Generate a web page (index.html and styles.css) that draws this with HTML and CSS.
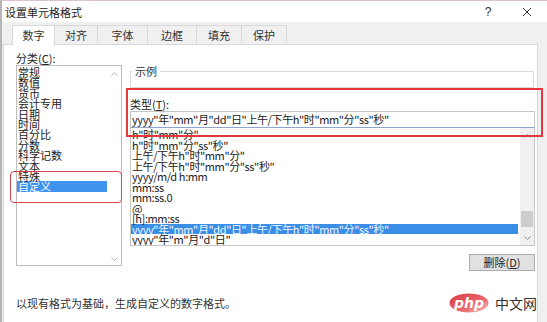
FILE: index.html
```html
<!DOCTYPE html>
<html>
  <head>
    <meta charset="utf-8">
    <link rel="stylesheet" href="styles.css">
  </head>
  <body>
    <div class="window">
      <div class="titlebar">
        <span class="title">设置单元格格式</span>
        <span class="help">?</span>
        <span class="close">
          <svg width="10" height="10" viewBox="0 0 10 10"><path d="M1 1L9 9M9 1L1 9" stroke="#333" stroke-width="1"/></svg>
        </span>
      </div>

      <div class="tabs">
        <div class="tab active" style="width:43px">数字</div>
        <div class="tab" style="width:43px">对齐</div>
        <div class="tab" style="width:50px">字体</div>
        <div class="tab" style="width:49px">边框</div>
        <div class="tab" style="width:45px">填充</div>
        <div class="tab" style="width:45px">保护</div>
      </div>

      <div class="panel">
        <div class="leftcol">
          <div class="label">分类(<u>C</u>):</div>
          <div class="catbox">
            <div class="catitems">
              <div>常规</div>
              <div>数值</div>
              <div>货币</div>
              <div>会计专用</div>
              <div>日期</div>
              <div>时间</div>
              <div>百分比</div>
              <div>分数</div>
              <div>科学记数</div>
              <div>文本</div>
              <div>特殊</div>
              <div class="sel">自定义</div>
            </div>
            <div class="catscroll">
              <svg width="7" height="4" viewBox="0 0 7 4"><path d="M0.5 3.5L3.5 0.5L6.5 3.5" fill="none" stroke="#b4b4b4"/></svg>
              <svg width="7" height="4" viewBox="0 0 7 4"><path d="M0.5 0.5L3.5 3.5L6.5 0.5" fill="none" stroke="#b4b4b4"/></svg>
            </div>
          </div>
        </div>

        <div class="rightcol">
          <fieldset class="sample"><legend>示例</legend></fieldset>
          <div class="label typelabel">类型(<u>T</u>):</div>
          <div class="typeinput">yyyy"年"mm"月"dd"日"上午/下午h"时"mm"分"ss"秒"</div>
          <div class="fmtbox">
            <div class="fmtitems">
              <div>h"时"mm"分"</div>
              <div>h"时"mm"分"ss"秒"</div>
              <div>上午/下午h"时"mm"分"</div>
              <div>上午/下午h"时"mm"分"ss"秒"</div>
              <div>yyyy/m/d h:mm</div>
              <div>mm:ss</div>
              <div>mm:ss.0</div>
              <div>@</div>
              <div>[h]:mm:ss</div>
              <div class="sel">yyyy"年"mm"月"dd"日"上午/下午h"时"mm"分"ss"秒"</div>
              <div>yyyy"年"m"月"d"日"</div>
            </div>
            <div class="fmtscroll">
              <div class="arrow">
                <svg width="7" height="4" viewBox="0 0 7 4"><path d="M0.5 3.5L3.5 0.5L6.5 3.5" fill="none" stroke="#8a8a8a"/></svg>
              </div>
              <div class="track"><div class="thumb"></div></div>
              <div class="arrow">
                <svg width="7" height="4" viewBox="0 0 7 4"><path d="M0.5 0.5L3.5 3.5L6.5 0.5" fill="none" stroke="#8a8a8a"/></svg>
              </div>
            </div>
          </div>
          <div class="btnrow">
            <button type="button" class="btn">删除(<u>D</u>)</button>
          </div>
        </div>

        <div class="footer">
          <span class="hint">以现有格式为基础，生成自定义的数字格式。</span>
          <span class="brand">
            <svg width="40" height="20" viewBox="0 0 40 20">
              <defs>
                <linearGradient id="phpg" x1="0" y1="0" x2="1" y2="1">
                  <stop offset="0" stop-color="#dc3a42"/>
                  <stop offset="0.6" stop-color="#e9676c"/>
                  <stop offset="1" stop-color="#f7c4c6"/>
                </linearGradient>
              </defs>
              <ellipse cx="20" cy="10" rx="19.5" ry="9.5" fill="url(#phpg)"/>
              <text x="20" y="14.5" text-anchor="middle" class="phptext">php</text>
            </svg>
            <span class="cn">中文网</span>
          </span>
        </div>
      </div>

      <div class="mark mark-left"></div>
      <div class="mark mark-right"></div>
    </div>
  </body>
</html>
```

FILE: styles.css
```css
* {
  box-sizing: border-box;
}
body {
  margin: 0;
  background: #fff;
  font-family: "Noto Sans CJK SC", "Noto Sans", sans-serif;
  font-size: 11px;
  color: #222;
}
u {
  text-decoration: underline;
}
.window {
  position: relative;
  width: 547px;
  height: 322px;
  overflow: hidden;
  background: #f0f0f0;
  border-top: 1px solid #dcc3d0;
  border-left: 2px solid #b5b5b5;
}
.titlebar {
  display: flex;
  align-items: center;
  height: 21px;
  padding-left: 3px;
  background: #fff;
  line-height: 14px;
}
.help {
  margin-left: auto;
  width: 14px;
  text-align: center;
  font-family: "Liberation Sans", sans-serif;
  font-size: 12px;
  color: #333;
}
.close {
  display: flex;
  justify-content: center;
  width: 14px;
  margin: 0 13px 0 25px;
}
.tabs {
  display: flex;
  align-items: flex-end;
  height: 22px;
  padding-left: 10px;
}
.tab {
  height: 19px;
  line-height: 18px;
  text-align: center;
  color: #333;
  background: #f0f0f0;
  border: 1px solid #d9d9d9;
  border-left: 0;
  border-bottom: 0;
}
.tab:first-child {
  border-left: 1px solid #d9d9d9;
}
.tab.active {
  position: relative;
  z-index: 1;
  height: 20px;
  margin-bottom: -1px;
  background: #fff;
}
.panel {
  display: grid;
  grid-template-columns: 106px 405px;
  column-gap: 8px;
  align-items: start;
  width: 535px;
  height: 290px;
  margin-left: 1px;
  padding-left: 12px;
  background: #fff;
  border: 1px solid #d9d9d9;
}
.label {
  line-height: 12px;
  white-space: nowrap;
}
.leftcol .label {
  padding-top: 7px;
}
.catbox {
  display: flex;
  height: 201px;
  margin-top: 1px;
  border: 1px solid #bdbdbd;
}
.catitems {
  flex: 1;
  padding-top: 1px;
  line-height: 10.4px;
}
.catitems div {
  padding-left: 1px;
  white-space: nowrap;
}
.catitems .sel {
  background: #3f93ec;
  color: #f4f8ff;
}
.catscroll {
  display: flex;
  flex-direction: column;
  justify-content: space-between;
  align-items: center;
  width: 14px;
  padding: 6px 0 4px;
}
.catscroll svg {
  display: block;
}
.sample {
  height: 23px;
  margin: 20px 0 0;
  padding: 0;
  width: 404px;
  min-width: 0;
  border: 1px solid #dcdcdc;
}
.sample legend {
  margin-left: 1px;
  padding: 0 3px;
  line-height: 12px;
  font-size: 11px;
  color: #333;
}
.typelabel {
  margin-top: 10px;
}
.typeinput {
  height: 17px;
  margin-top: 1px;
  padding-left: 1px;
  line-height: 15px;
  letter-spacing: -0.4px;
  white-space: nowrap;
  overflow: hidden;
  border: 1px solid #c6c6c6;
  border-bottom-color: #8ea6cc;
}
.fmtbox {
  display: flex;
  height: 118px;
  border: 1px solid #c6c6c6;
  border-top: 0;
}
.fmtitems {
  flex: 1;
  padding-top: 1px;
  line-height: 10.5px;
  letter-spacing: -0.4px;
  overflow: hidden;
}
.fmtitems div {
  padding-left: 1px;
  white-space: nowrap;
}
.fmtitems .sel {
  margin-right: 2px;
  background: #3a8ee6;
  color: #eef5ff;
}
.fmtscroll {
  display: flex;
  flex-direction: column;
  width: 14px;
  background: #f0f0f0;
}
.fmtscroll .arrow {
  display: flex;
  align-items: center;
  justify-content: center;
  height: 15px;
}
.fmtscroll .arrow svg {
  display: block;
}
.track {
  flex: 1;
  display: flex;
  flex-direction: column;
  align-items: center;
}
.thumb {
  width: 12px;
  height: 16px;
  margin-top: auto;
  margin-bottom: 3px;
  background: #cdcdcd;
}
.btnrow {
  display: flex;
  justify-content: flex-end;
  margin-top: 8px;
}
.btn {
  width: 66px;
  height: 17px;
  padding: 0;
  font-family: inherit;
  font-size: 11px;
  line-height: 15px;
  color: #222;
  background: #e1e1e1;
  border: 1px solid #adadad;
}
.footer {
  grid-column: 1 / -1;
  display: flex;
  justify-content: space-between;
  align-items: center;
  height: 30px;
  margin-top: 2px;
}
.hint {
  color: #333;
}
.brand {
  display: flex;
  align-items: center;
  gap: 6px;
  margin-right: -2px;
}
.brand svg {
  display: block;
}
.phptext {
  font-family: "DejaVu Sans", sans-serif;
  font-size: 14px;
  font-style: italic;
  font-weight: bold;
  fill: #fff;
}
.cn {
  font-size: 14px;
  color: #333;
}
.mark {
  position: absolute;
  pointer-events: none;
}
.mark-left {
  left: 8px;
  top: 170px;
  width: 112px;
  height: 32px;
  border: 1.5px solid #d6454b;
  border-radius: 4px;
}
.mark-right {
  left: 124px;
  top: 87px;
  width: 417px;
  height: 49px;
  border: 2px solid #e5363c;
}
```
